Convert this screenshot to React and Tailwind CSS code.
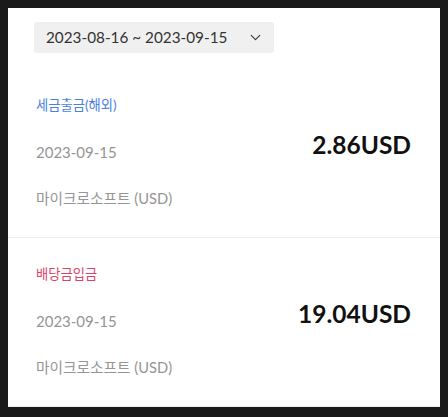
import { ChevronDown } from 'lucide-react'

const items = [
  { type: '세금출금(해외)', color: 'text-[#4a80e0]', date: '2023-09-15', amount: '2.86USD', name: '마이크로소프트 (USD)' },
  { type: '배당금입금', color: 'text-[#d9456a]', date: '2023-09-15', amount: '19.04USD', name: '마이크로소프트 (USD)' },
]

export default function App() {
  return (
    <div className="h-[417px] bg-[#1a1a1a] px-[8px] pt-[8px] overflow-hidden font-['Lato','Noto_Sans_CJK_KR',sans-serif]">
      <div className="bg-white">
        <div className="pt-[14px] pb-[16px] pl-[26px]">
          <button className="w-[240px] h-[31px] flex items-center justify-between pl-[12px] pr-[10px] bg-[#f0f0f0] rounded-[3px] text-[#333] text-[15.3px]">
            <span>2023-08-16 ~ 2023-09-15</span>
            <ChevronDown size={17} strokeWidth={1.6} className="text-[#333]" />
          </button>
        </div>

        {items.map((it, i) => (
          <div key={i} className="h-[169px] border-b border-[#ececec] pt-[27px] pl-[28px] pr-[29px]">
            <p className={`text-[13.3px] leading-[18px] ${it.color}`}>{it.type}</p>
            <div className="flex justify-between items-start mt-[16px]">
              <span className="mt-[12px] text-[15px] leading-[20px] text-[#959595]">{it.date}</span>
              <span className="text-[24.5px] leading-[30px] font-bold text-[#111]">{it.amount}</span>
            </div>
            <p className="mt-[26px] text-[14.7px] leading-[20px] text-[#959595]">{it.name}</p>
          </div>
        ))}
      </div>
    </div>
  )
}
